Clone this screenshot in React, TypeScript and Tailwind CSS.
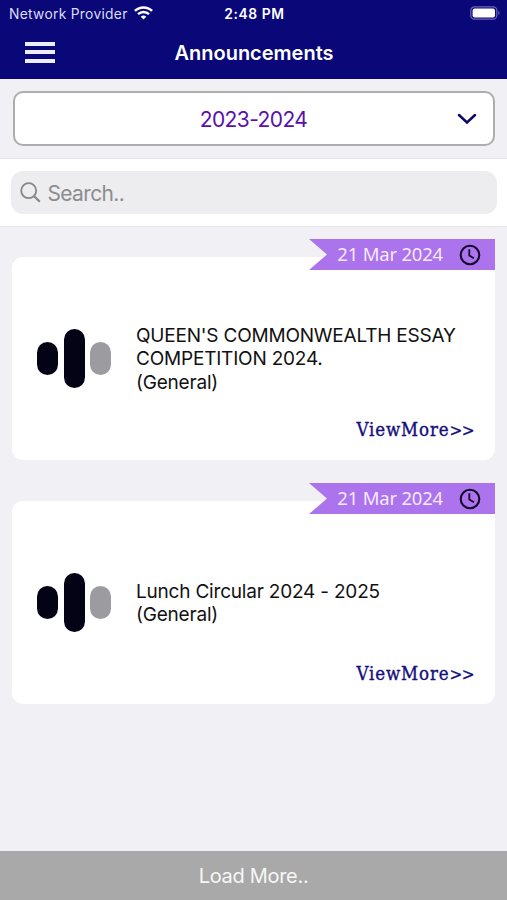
type Announcement = {
  id: number;
  date: string;
  title: string;
  category: string;
};

const announcements: Announcement[] = [
  {
    id: 1,
    date: "21 Mar 2024",
    title: "QUEEN'S COMMONWEALTH ESSAY COMPETITION 2024.",
    category: "General",
  },
  {
    id: 2,
    date: "21 Mar 2024",
    title: "Lunch Circular 2024 - 2025",
    category: "General",
  },
];

const StatusBar = () => (
  <div className="grid h-[28px] grid-cols-3 items-center pl-[9px] pr-[7px]">
    <div className="flex items-center gap-[6px] whitespace-nowrap">
      <span className="text-[13.8px] tracking-[0.3px] text-[#dcdcf4]">Network Provider</span>
      <svg width="19" height="14" viewBox="0 0 19 14" fill="none" stroke="white" className="-mt-[2px]">
        <path d="M0.9 4.9a12.4 12.4 0 0 1 17.2 0" strokeWidth="2.5" />
        <path d="M4 8.2a7.9 7.9 0 0 1 11 0" strokeWidth="2.4" />
        <path d="M9.5 13.6 6.7 10.8a4 4 0 0 1 5.6 0z" fill="white" stroke="none" />
      </svg>
    </div>
    <div className="text-center text-[13.8px] font-semibold tracking-[0.6px]">2:48 PM</div>
    <div className="flex justify-end">
      <svg width="30" height="14" viewBox="0 0 30 14" className="-mt-[2px]">
        <rect x="0.8" y="0.8" width="26" height="12.4" rx="3.6" fill="none" stroke="#6a67b5" strokeWidth="1.2" />
        <rect x="2.6" y="2.6" width="22.4" height="8.8" rx="2" fill="white" />
        <path d="M28.3 4.8c1.6.6 1.6 3.8 0 4.4z" fill="#6a67b5" />
      </svg>
    </div>
  </div>
);

const Logo = () => (
  <div className="flex w-[74px] shrink-0 items-center justify-between">
    <div className="h-[33px] w-[21px] rounded-full bg-[#040315]" />
    <div className="h-[59px] w-[21px] rounded-full bg-[#040315]" />
    <div className="h-[33px] w-[21px] rounded-full bg-[#9c9ba0]" />
  </div>
);

const DateRibbon = ({ date }: { date: string }) => (
  <div className="absolute -top-[18px] right-0 flex h-[31px] w-[186px] items-center justify-end bg-[#ab73ec] pr-[14px] [clip-path:polygon(0_0,100%_0,100%_100%,0_100%,18px_50%)]">
    <span className="mr-[16px] pb-[2px] font-['Noto_Sans',sans-serif] text-[18.5px] tracking-[-0.2px] text-[#f6e9ff]">
      {date}
    </span>
    <svg width="22" height="22" viewBox="0 0 22 22" fill="none" stroke="#16062b">
      <circle cx="11" cy="11" r="9.3" strokeWidth="2.1" />
      <path d="M10.3 5.2v6.2l4.6 2.8" strokeWidth="1.8" />
    </svg>
  </div>
);

const AnnouncementCard = ({ item }: { item: Announcement }) => (
  <div className="relative flex h-[203px] flex-col rounded-[11px] bg-white">
    <DateRibbon date={item.date} />
    <div className="mt-[57px] flex h-[88px] items-center pl-[25px]">
      <Logo />
      <p className="ml-[25px] w-[340px] pt-[2px] text-[19px] leading-[23.3px] tracking-[-0.2px] text-[#111]">
        {item.title}
        <br />({item.category})
      </p>
    </div>
    <button className="mr-[21px] mt-[16px] flex self-end font-['DejaVu_Serif_Condensed','DejaVu_Serif',serif] text-[18.5px] leading-[24px] tracking-[0.9px] text-[#15107c] [-webkit-text-stroke:0.35px_#15107c]">
      ViewMore<span className="text-[17px] tracking-[-0.6px]">&gt;&gt;</span>
    </button>
  </div>
);

const App = () => {
  return (
    <div className="flex h-[900px] w-[507px] flex-col bg-[#f0f0f5] font-['Inter',sans-serif]">
      <header className="h-[79px] bg-[#0a0779] text-white">
        <StatusBar />
        <div className="grid h-[49px] grid-cols-[60px_1fr_60px] items-center">
          <button className="-mt-px ml-[25px] flex w-[30px] flex-col gap-[4.5px]">
            <span className="h-[4px] w-full bg-[#ededfa]" />
            <span className="h-[4px] w-full bg-[#ededfa]" />
            <span className="h-[4px] w-full bg-[#ededfa]" />
          </button>
          <h1 className="pl-px text-center text-[20px] font-semibold">Announcements</h1>
        </div>
      </header>

      {/* Academic year */}
      <div className="h-[80px] border-b border-[#e6e6ea] px-[12.5px] pt-[12px]">
        <button className="grid h-[55px] w-full grid-cols-[50px_1fr_50px] items-center rounded-[10px] border-2 border-[#adadad] bg-white">
          <span className="col-start-2 pt-[2px] text-[21px] tracking-[-0.6px] text-[#5a0fae]">2023-2024</span>
          <svg width="20" height="12" viewBox="0 0 20 12" fill="none" className="ml-[14px]">
            <path d="M2 2l8 7.5L18 2" stroke="#0c0768" strokeWidth="2.5" strokeLinecap="round" />
          </svg>
        </button>
      </div>

      {/* Search */}
      <div className="h-[68px] border-b border-[#e6e6ea] bg-white px-[10.5px] pt-[12px]">
        <div className="flex h-[43px] items-center rounded-[12px] bg-[#ededef] pl-[9px]">
          <svg width="21" height="21" viewBox="0 0 21 21" fill="none" stroke="#87878b">
            <circle cx="8.7" cy="8.7" r="7.5" strokeWidth="1.8" />
            <path d="M14.2 14.2l5.6 5.6" strokeWidth="2.2" />
          </svg>
          <span className="ml-[7px] pt-[2px] text-[21px] tracking-[-0.65px] text-[#8c8c90]">Search..</span>
        </div>
      </div>

      <main className="flex flex-1 flex-col gap-[41px] px-[12px] pt-[30px]">
        {announcements.map((item) => (
          <AnnouncementCard key={item.id} item={item} />
        ))}
      </main>

      <button className="h-[49px] bg-[#a9a9a9] pt-px text-[20px] tracking-[-0.3px] text-[#f7f7f7]">Load More..</button>
    </div>
  );
};

export default App;
